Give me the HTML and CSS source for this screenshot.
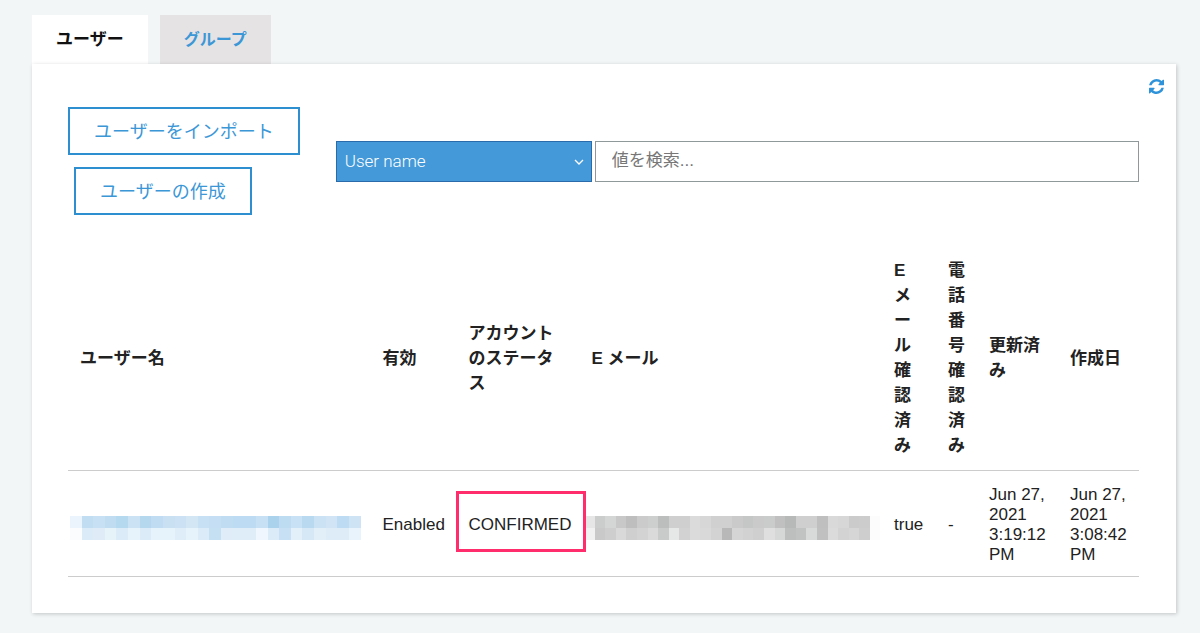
FILE: index.html
```html
<!DOCTYPE html>
<html lang="ja">
<head>
    <meta charset="UTF-8">
    <meta name="viewport" content="width=device-width, initial-scale=1.0">
    <title>ユーザー</title>
    <link rel="stylesheet" href="styles.css">
</head>
<body>

<nav class="tabs">
    <a href="#users" class="tab active">ユーザー</a>
    <a href="#groups" class="tab">グループ</a>
</nav>

<main class="panel" id="users">
    <button type="button" class="refresh" aria-label="更新">
        <svg viewBox="0 0 1536 1536" width="15" height="15">
            <path fill="currentColor" d="M1511 928q0 5-1 7-64 268-268 434.500T764 1536q-146 0-282.500-55T238 1324l-129 129q-19 19-45 19t-45-19-19-45V960q0-26 19-45t45-19h448q26 0 45 19t19 45-19 45l-137 137q71 66 161 102t187 36q134 0 250-65t186-179q11-17 53-117 8-23 30-23h192q13 0 22.500 9.500t9.500 22.500zM1536 128v448q0 26-19 45t-45 19h-448q-26 0-45-19t-19-45 19-45l138-138Q969 256 768 256q-134 0-250 65T332 500q-11 17-53 117-8 23-30 23H50q-13 0-22.500-9.500T18 608v-7q65-268 270-434.500T768 0q146 0 284 55.500T1297 212l130-129q19-19 45-19t45 19 19 45z"/>
        </svg>
    </button>

    <div class="toolbar">
        <div class="actions">
            <button type="button" class="btn">ユーザーをインポート</button>
            <button type="button" class="btn btn-create">ユーザーの作成</button>
        </div>
        <form class="search">
            <div class="select-wrap">
                <select aria-label="検索する属性">
                    <option>User name</option>
                </select>
                <svg class="chevron" viewBox="0 0 10 6" width="10" height="6">
                    <path d="M1 1l4 4 4-4" fill="none" stroke="currentColor" stroke-width="1.3"/>
                </svg>
            </div>
            <input type="text" placeholder="値を検索..." aria-label="値を検索">
        </form>
    </div>

    <table>
        <colgroup>
            <col class="col-wide">
            <col class="col-enabled">
            <col class="col-status">
            <col class="col-wide">
            <col class="col-verified">
            <col class="col-phone">
            <col class="col-date">
            <col class="col-date">
        </colgroup>
        <thead>
            <tr>
                <th>ユーザー名</th>
                <th>有効</th>
                <th>アカウントのステータス</th>
                <th>E メール</th>
                <th>E メール確認済み</th>
                <th>電話番号確認済み</th>
                <th>更新済み</th>
                <th>作成日</th>
            </tr>
        </thead>
        <tbody>
            <tr>
                <td class="masked-name"><svg id="mask-name" class="mosaic" preserveAspectRatio="none" shape-rendering="crispEdges"></svg></td>
                <td>Enabled</td>
                <td class="highlight">CONFIRMED</td>
                <td class="masked-mail"><svg id="mask-mail" class="mosaic" preserveAspectRatio="none" shape-rendering="crispEdges"></svg></td>
                <td>true</td>
                <td>-</td>
                <td>Jun 27, 2021 3:19:12 PM</td>
                <td>Jun 27, 2021 3:08:42 PM</td>
            </tr>
        </tbody>
    </table>
</main>

<script src="mosaic.js"></script>
</body>
</html>
```
FILE: styles.css
```css
* {
    box-sizing: border-box;
}
body {
    margin: 0;
    padding: 15px 24px 20px 32px;
    background-color: #f2f6f7;
    color: #222;
    font-family: "Liberation Sans", "Noto Sans CJK JP", sans-serif;
    font-size: 17px;
}
button, input, select {
    font-family: inherit;
    border-radius: 0;
}
.tabs {
    display: flex;
    gap: 12px;
}
.tab {
    padding: 0 24px;
    background-color: #e5e3e4;
    color: #3c97d7;
    font-size: 16px;
    font-weight: bold;
    line-height: 49px;
    text-decoration: none;
}
.tab.active {
    background-color: white;
    color: #111;
    font-size: 17px;
}
.panel {
    position: relative;
    padding: 43px 37px 36px 36px;
    background-color: white;
    box-shadow: 1px 1px 4px rgba(0, 0, 0, 0.2);
}
.refresh {
    position: absolute;
    top: 15px;
    right: 12px;
    padding: 0;
    border: 0;
    background: none;
    color: #2e93da;
}
.refresh svg {
    display: block;
}
.toolbar {
    display: flex;
    align-items: center;
    margin-bottom: 31px;
}
.actions {
    display: flex;
    flex-direction: column;
    align-items: flex-start;
    gap: 12px;
    width: 25%;
}
.btn {
    height: 48px;
    padding: 0 24px 2px;
    border: 2px solid #2e8fd0;
    background-color: white;
    color: #3c97d7;
    font-size: 18px;
    white-space: nowrap;
}
.btn-create {
    margin-left: 6px;
}
.search {
    display: flex;
    flex: 1;
    gap: 3px;
}
.select-wrap {
    position: relative;
    width: 256px;
}
.search select {
    width: 100%;
    height: 41px;
    padding: 0 8px;
    appearance: none;
    border: 1px solid #2a6cab;
    background-color: #4499d8;
    color: white;
    font-family: Roboto, "Liberation Sans", sans-serif;
    font-size: 17px;
    font-weight: 300;
}
.chevron {
    position: absolute;
    top: 18px;
    right: 8px;
    color: white;
    pointer-events: none;
}
.search input {
    flex: 1;
    min-width: 0;
    height: 41px;
    padding: 0 16px;
    border: 1px solid #8f9999;
    font-size: 17px;
}
.search input::placeholder {
    color: #777;
}

table {
    width: 100%;
    table-layout: fixed;
    border-collapse: separate;
    border-spacing: 0;
}
th, td {
    padding: 12px;
    border-bottom: 1px solid #ccc;
    text-align: left;
    vertical-align: middle;
}
th {
    line-height: 25px;
    line-break: anywhere; /* narrow columns stack one character per line */
}
td {
    padding: 14px 12px 11px;
    line-height: 20px;
}
.col-enabled {
    width: 86px;
}
.col-status {
    width: 123px;
}
.col-verified {
    width: 54px;
}
.col-phone {
    width: 41px;
}
.col-date {
    width: 81px;
}

/* box drawn around the account status */
.highlight {
    position: relative;
}
.highlight::after {
    content: "";
    position: absolute;
    z-index: 1;
    inset: 20px -6px 24px -1px;
    border: 3px solid #ff2d6b;
}

/* pixelated values */
.masked-name {
    padding: 8px 10px 0 2px;
}
.masked-mail {
    padding: 8px 2px 0 4px;
}
.mosaic {
    display: block;
    width: 100%;
    height: 24px;
}
```
FILE: mosaic.js
```js
const nameRows = [
    "ebf4fc c0ddf2 c8e0f3 bfdcf1 b5d9ef cae2f3 b6d8ef c0dcf2 c9e0f3 cce2f4 d3e6f4 c8e0f4 c5def3 bfdcf2 bddbf2 bddbf2 c8e0f4 abd2ed bddcf2 c9e1f4 b9d9f0 cae2f3 d0e4f5 bddcf3 cee4f5",
    "fbfcfe dbebf8 dfecf8 e6f3f9 dbebf7 e6f3fa dbebf7 e6f3fa e6f3fa dfedf8 e6f3fa dbebf7 c6e0f3 e0edf8 dfedf8 dfedf8 eff6fe dbebf7 c8e0f3 e3f0fa d6e8f6 e2eff9 deecf8 deecf8 e9f3fb"
];
const mailRows = [
    "e6e6e6 cbcdcc d4d6d5 c8c8c8 bebebe cbcbcb cdcfce bcbebd cfcfcf cfcfcf dadbda d7d7d7 d0d0d0 d0d0d0 c9cac9 c5c7c6 c9cac9 cacccb c0c0c0 b7b9b8 cfcfcf cfcfcf bfbfbf d9d9d9 d7d7d7 cacbca cccccc fcfcfc",
    "f1f1f1 c9c9c9 cecece d8d9d8 cfcfcf d3d3d3 dadada c9cbca e6e8e7 d1d2d1 dadbda d9d9d9 d3d3d3 b8b8b8 d5d5d5 d2d2d2 cfcfcf dfdfdf d6d8d7 bdbfbe c1c3c2 d8dad9 c0c0c0 dbdbdb d3d3d3 d6d6d6 cecece fcfcfc"
];

function drawMosaic(id, rows) {
    const svg = document.getElementById(id);
    const cells = rows.map(row => row.split(" "));
    svg.setAttribute("viewBox", `0 0 ${cells[0].length} ${cells.length}`);

    cells.forEach((row, y) => {
        row.forEach((color, x) => {
            const rect = document.createElementNS("http://www.w3.org/2000/svg", "rect");
            rect.setAttribute("x", x);
            rect.setAttribute("y", y);
            rect.setAttribute("width", 1);
            rect.setAttribute("height", 1);
            rect.setAttribute("fill", "#" + color);
            svg.appendChild(rect);
        });
    });
}

drawMosaic("mask-name", nameRows);
drawMosaic("mask-mail", mailRows);
```
